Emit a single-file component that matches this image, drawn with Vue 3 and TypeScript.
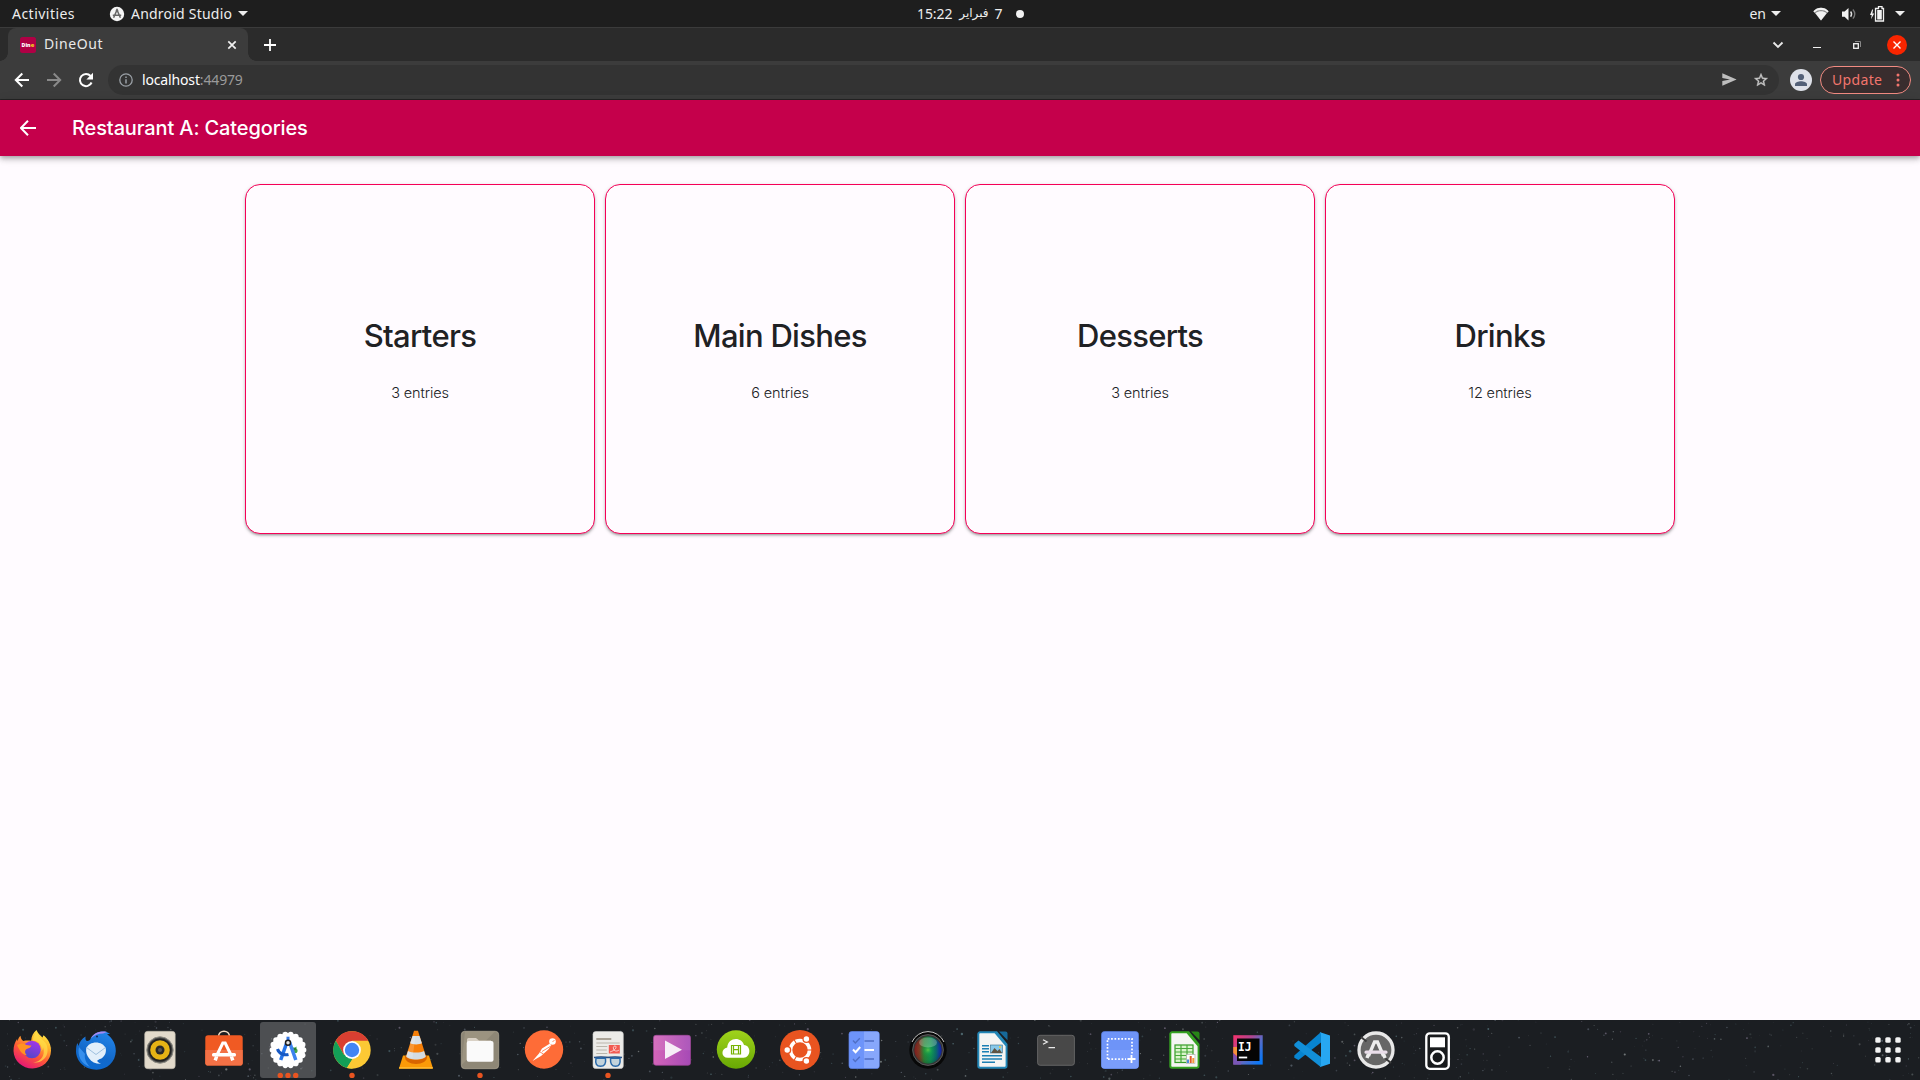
<script setup lang="ts">
interface Category { name: string; entries: number }
interface DockApp { id: string; windows: number; active?: boolean }
interface Star { x: number; y: number; r: number; c: string; o: number }

const categories: Category[] = [
  { name: 'Starters', entries: 3 },
  { name: 'Main Dishes', entries: 6 },
  { name: 'Desserts', entries: 3 },
  { name: 'Drinks', entries: 12 },
]

const apps: DockApp[] = [
  { id: 'firefox', windows: 0 },
  { id: 'thunderbird', windows: 0 },
  { id: 'rhythmbox', windows: 0 },
  { id: 'software', windows: 0 },
  { id: 'android-studio', windows: 3, active: true },
  { id: 'chrome', windows: 1 },
  { id: 'vlc', windows: 0 },
  { id: 'files', windows: 1 },
  { id: 'postman', windows: 0 },
  { id: 'documents', windows: 1 },
  { id: 'videos', windows: 0 },
  { id: 'cloud', windows: 0 },
  { id: 'ubuntu', windows: 0 },
  { id: 'todo', windows: 0 },
  { id: 'camera', windows: 0 },
  { id: 'writer', windows: 0 },
  { id: 'terminal', windows: 0 },
  { id: 'screenshot', windows: 0 },
  { id: 'calc', windows: 0 },
  { id: 'intellij', windows: 0 },
  { id: 'vscode', windows: 0 },
  { id: 'updater', windows: 0 },
  { id: 'ipod', windows: 0 },
]

/* Night-sky speckles behind the dock, from a fixed seed */
let seed = 4271
const rand = (): number => {
  seed = (seed * 16807) % 2147483647
  return seed / 2147483647
}
const tints = ['#7f8a8c', '#8b7f99', '#5f8088', '#9aa0a0', '#6a7480']
const stars: Star[] = Array.from({ length: 700 }, () => ({
  x: rand() * 1920,
  y: rand() * 60,
  r: 0.4 + rand() * rand() * 0.9,
  c: tints[Math.floor(rand() * tints.length)],
  o: 0.15 + rand() * 0.55,
}))

const gridDots = [20, 30, 39.7].flatMap((y) => [22, 32, 42].map((x) => ({ x, y })))
const scallops = Array.from({ length: 18 }, (_, i) => {
  const a = (i * Math.PI) / 9
  return { x: 32 + 15.6 * Math.cos(a), y: 30 + 15.6 * Math.sin(a) }
})
</script>

<template>
  <div class="screen">
    <header class="panel">
      <span class="activities">Activities</span>
      <svg class="app-mark" viewBox="0 0 16 16">
        <circle cx="8" cy="8" r="7.2" fill="#f4f4f4" />
        <path d="M4.6 11.8 8 4l3.4 7.8M3.8 9.2h8.4" fill="none" stroke="#666" stroke-width="1.5" />
        <circle cx="8" cy="4.4" r="1.2" fill="#666" />
      </svg>
      <span class="app-name">Android Studio</span>
      <i class="caret caret-app"></i>
      <div class="clock">
        <span class="time">15:22</span>
        <span class="month" dir="rtl">فبراير</span>
        <span class="day">7</span>
        <i class="notice"></i>
      </div>
      <div class="status">
        <span class="lang">en</span>
        <i class="caret caret-lang"></i>
        <svg class="wifi" width="16" height="16" viewBox="0 0 16 16">
          <path d="M.4 5.2C4.6.6 11.4.6 15.6 5.2L8 14.6Z" fill="#8b8b8b" />
          <path d="M.4 5.2C4.6.6 11.4.6 15.6 5.2l-1 1.3C10.900 3.200 5.100 3.200 1.400 6.500Z" fill="#f2f2f2" />
          <path d="M2.400 7.200C5.600 4.600 10.400 4.600 13.600 7.200L8 14.600Z" fill="#f2f2f2" />
        </svg>
        <svg class="volume" width="16" height="16" viewBox="0 0 16 16">
          <path d="M1 5.500h2.600L7.500 2v12.500L3.600 10.700H1Z" fill="#f2f2f2" />
          <path d="M9.600 5.500q2 2.600 0 5.200" fill="none" stroke="#e2e2e2" stroke-width="1.400" />
          <path d="M11.900 3.500q3.800 4.600 0 9.200" fill="none" stroke="#777" stroke-width="1.300" />
        </svg>
        <svg class="battery" width="16" height="16" viewBox="0 0 16 16">
          <path d="M3.200 3.600 1 9h1.700L2 13.200 5.200 7.400H3.400l.7-3.800Z" fill="#f2f2f2" />
          <path d="M9.500.500h3.500v2h1.500v12.500h-8V2.500h3Z" fill="none" stroke="#f2f2f2" stroke-width="1.300" />
          <rect x="8.200" y="4" width="4.600" height="9.500" fill="#f2f2f2" />
        </svg>
        <i class="caret"></i>
      </div>
    </header>

    <div class="tabstrip">
      <div class="tab">
        <svg class="favicon" width="16" height="16" viewBox="0 0 16 16">
          <rect width="16" height="16" rx="2.500" fill="#b00045" />
          <text x="1.600" y="9.900" textLength="9" lengthAdjust="spacingAndGlyphs" font-family="Open Sans, sans-serif" font-size="5.800" font-weight="800" fill="#fff">Din</text>
          <text x="10.700" y="9.900" font-family="Open Sans, sans-serif" font-size="5.800" font-weight="800" fill="#f3d21b">e</text>
        </svg>
        <span class="tab-title">DineOut</span>
        <svg class="tab-close" width="10" height="10" viewBox="0 0 10 10"><path d="m1.300 1.300 7.400 7.400m0-7.400L1.300 8.700" stroke="#f0f0f0" stroke-width="1.700" /></svg>
      </div>
      <svg class="new-tab" width="12" height="12" viewBox="0 0 12 12"><path d="M6 0v12M0 6h12" stroke="#fff" stroke-width="1.800" /></svg>
      <div class="window-controls">
        <svg width="12" height="8" viewBox="0 0 12 8"><path d="m1.500 1.500 4.500 4.500 4.500-4.500" fill="none" stroke="#e8e8e8" stroke-width="1.900" /></svg>
        <svg width="8" height="8" viewBox="0 0 8 8"><path d="M0 6.500h8" stroke="#f0f0f0" /></svg>
        <svg width="8" height="8" viewBox="0 0 8 8"><path d="M2 .500h5.500V6" fill="none" stroke="#888" /><rect x=".7" y="2.700" width="4.600" height="4.600" fill="none" stroke="#f4f4f4" stroke-width="1.300" /></svg>
        <span class="close"><svg width="8" height="8" viewBox="0 0 8 8"><path d="m.5.500 7 7m0-7-7 7" stroke="#fff" stroke-width="1.400" /></svg></span>
      </div>
    </div>

    <div class="toolbar">
      <svg class="nav" viewBox="0 0 16 16"><path d="M15 8H2M8.300 1.500 1.800 8l6.500 6.500" fill="none" stroke="#fff" stroke-width="2" /></svg>
      <svg class="nav" viewBox="0 0 16 16"><path d="M1 8h13M7.700 1.500 14.200 8l-6.500 6.500" fill="none" stroke="#8a8a8a" stroke-width="2" /></svg>
      <svg class="nav" viewBox="0 0 16 16"><path d="M13.600 10.500A6.100 6.100 0 1 1 12.600 4" fill="none" stroke="#fff" stroke-width="2" /><path d="M15 .800v6.600H8.400Z" fill="#fff" /></svg>
      <div class="omnibox">
        <svg width="14" height="14" viewBox="0 0 14 14"><circle cx="7" cy="7" r="6.200" fill="none" stroke="#9aa0a6" stroke-width="1.300" /><path d="M7 6.200v4.300M7 3.400v1.500" stroke="#9aa0a6" stroke-width="1.500" /></svg>
        <span class="url"><b>localhost</b><span>:44979</span></span>
        <svg class="send" width="15" height="13" viewBox="0 0 15 13"><path d="M.300.300 14.600 6.500.300 12.700V7.900L8 6.500.300 5.100Z" fill="#bdbdbd" /></svg>
        <svg class="star" width="16" height="16" viewBox="0 0 24 24"><path d="M22 9.240l-7.190-.62L12 2 9.190 8.630 2 9.240l5.460 4.730L5.820 21 12 17.270 18.180 21l-1.630-7.030L22 9.240zM12 15.400l-3.760 2.270 1-4.280-3.320-2.880 4.380-.38L12 6.100l1.710 4.040 4.380.38-3.320 2.880 1 4.280L12 15.400z" fill="#c8c8c8" stroke="#c8c8c8" stroke-width=".6" /></svg>
      </div>
      <svg class="avatar" width="22" height="22" viewBox="0 0 22 22"><circle cx="11" cy="11" r="11" fill="#dee1e9" /><circle cx="11" cy="8" r="3.100" fill="#536078" /><path d="M5 17v-1.700c0-2 3.500-3 6-3s6 1 6 3V17Z" fill="#536078" /></svg>
      <div class="update"><span>Update</span><svg width="4" height="14" viewBox="0 0 4 14"><circle cx="2" cy="2" r="1.500" /><circle cx="2" cy="7" r="1.500" /><circle cx="2" cy="12" r="1.500" /></svg></div>
    </div>

    <div class="appbar">
      <svg width="16" height="16" viewBox="0 0 16 16"><path d="M16 8H2M8 .700.900 8 8 15.300" fill="none" stroke="#fff" stroke-width="2" /></svg>
      <h1>Restaurant A: Categories</h1>
    </div>

    <main>
      <section v-for="c in categories" :key="c.name" class="card">
        <h2>{{ c.name }}</h2>
        <p>{{ c.entries }} entries</p>
      </section>
    </main>

    <footer class="dock">
      <svg class="sky" width="1920" height="60">
        <circle v-for="(s, i) in stars" :key="i" :cx="s.x" :cy="s.y" :r="s.r" :fill="s.c" :opacity="s.o" />
      </svg>
      <svg v-for="app in apps" :key="app.id" class="icon" viewBox="0 0 64 60">
        <rect v-if="app.active" x="4" y="2" width="56" height="56" rx="3" fill="#fff" fill-opacity=".22" />

        <g v-if="app.id === 'firefox'">
          <defs>
            <linearGradient id="ff-a" x1=".8" y1="0" x2=".25" y2="1"><stop offset="0" stop-color="#fff44f" /><stop offset=".3" stop-color="#ffb52a" /><stop offset=".6" stop-color="#ff5a36" /><stop offset="1" stop-color="#e3107c" /></linearGradient>
            <linearGradient id="ff-b" x1=".7" y1="0" x2=".3" y2="1"><stop offset="0" stop-color="#a435e8" /><stop offset="1" stop-color="#5148c8" /></linearGradient>
          </defs>
          <path d="M36.500 10c1 3 3.500 5 6 7.500l1-2.200c5 4 7.600 9.500 7.500 15.500C50.800 41 42.500 48.500 32.500 48.500S13.800 41 13.500 31c-.1-5 1.500-9 3.500-12l.8 2.300c.2-2.800 1.400-4.300 2.700-5.500.3 2.700 1.200 4.200 2.700 5.200 3-.6 5.500-.5 8-.2.3-4.500 1.800-8 5.300-10.800Z" fill="url(#ff-a)" />
          <circle cx="32" cy="29.500" r="8.700" fill="url(#ff-b)" />
          <path d="M17 25c3-2 6-2 8-.8 2.500 1.400 4.500 1.300 6.500 1.300-1 2.500-3.500 2.800-4.800 3.600-2.300 1.500-2 4.400.3 6.100-5-.2-7.500-5-10-10.200Z" fill="#ff9222" />
          <path d="M33 20.500c5 .2 9.500 4 8.500 11 1.500-2 1.500-4.500 1.500-4.500 3 9-3 15-10 15.500 12 1 17-9 13.500-18-2-4-8-7-10-12-2.500 2.500-3.500 5-3.500 8Z" fill="#ffe04a" opacity=".7" />
        </g>

        <g v-else-if="app.id === 'thunderbird'">
          <defs><linearGradient id="tb" x1=".7" y1="0" x2=".3" y2="1"><stop offset="0" stop-color="#2384e8" /><stop offset=".6" stop-color="#1268c9" /><stop offset="1" stop-color="#0c6bd2" /></linearGradient></defs>
          <path d="M26 20c2-6 9-9.500 16-8.300l4 2-3 .6c5.500 4 9 9.500 8.800 17C51.500 42 43 49.700 32.500 49.700 21 49.700 12 41.500 12 31c0-4 .5-6 1.500-8l1 3c1-4 3.500-7.500 7-9.500-.5 4 1 6 4.500 3.500Z" fill="url(#tb)" />
          <path d="M27 18.500C29.500 13 36 10.500 43 12l-4 1.500c-5 0-8.500 1.500-12 5Z" fill="#a38af4" />
          <path d="M15 27c-2 8 2 17 11 20-4-4-6-9-5-13Z" fill="#4ca5ff" opacity=".65" />
          <path d="M22.200 28.500c3-8 16.600-8 19.600 0 .8 5-1.800 9-5.800 10.600-2 1-3.500 1.200-2 3 .8.800 1.800 1.400 3 1.700-5 .2-9.500-1.800-12-5.600-2.200-2.600-3.300-6-2.800-9.700Z" fill="#e3effa" />
          <path d="m22.500 27.500 9.500 7 9.500-7" fill="none" stroke="#9fc0de" stroke-width="1" />
          <circle cx="33" cy="16.500" r="1" fill="#122654" />
        </g>

        <g v-else-if="app.id === 'rhythmbox'">
          <rect x="14.700" y="11.300" width="30.500" height="37.400" rx="3" fill="#e2dacb" stroke="#beb7aa" stroke-width=".6" transform="translate(2 0)" />
          <circle cx="32" cy="30" r="13.200" fill="#4b4c4b" stroke="#8e8c84" stroke-width="1" /><circle cx="32" cy="30" r="11.500" fill="#222" /><circle cx="32" cy="30" r="9.800" fill="#e5b315" /><circle cx="32" cy="30" r="4.500" fill="#292929" /><circle cx="32" cy="30" r="2" fill="#555" />
        </g>

        <g v-else-if="app.id === 'software'">
          <path d="M26.500 18.500v-1.800c0-7.300 11-7.300 11 0v1.800" fill="none" stroke="#f5dfc7" stroke-width="1.500" />
          <rect x="13.300" y="15.300" width="37.400" height="30.300" rx="2.800" fill="#f05a23" /><path d="M13.300 30h37.400v13a2.800 2.800 0 0 1-2.800 2.600H16.100a2.800 2.800 0 0 1-2.800-2.600Z" fill="#f37146" />
          <path d="m24.500 36 6.300-13h2.400l6.300 13" fill="none" stroke="#fff" stroke-width="3" /><rect x="20" y="33" width="24" height="3.600" rx="1.500" fill="#fff" /><path d="m24.600 36.500-1.400 3.800m16.200-3.800 1.400 3.800" stroke="#fff" stroke-width="3.500" />
        </g>

        <g v-else-if="app.id === 'android-studio'">
          <circle v-for="(s, i) in scallops" :key="i" :cx="s.x" :cy="s.y" r="2.800" fill="#fff" /><circle cx="32" cy="30" r="16.800" fill="#fff" />
          <path d="M35 27.500h4l1.500-1v2c1.500 1 1.500 3.300 0 4.500H37Z" fill="#42a548" /><circle cx="39" cy="29" r=".8" fill="#194b20" />
          <path d="m31 22-6.300 18" stroke="#2775e8" stroke-width="3.500" /><path d="m33.500 22 6.300 18" stroke="#3c82ef" stroke-width="3.500" /><path d="M21.500 29c1.500 5 7 6.500 11 5.500" fill="none" stroke="#1759c4" stroke-width="3" /><path d="M30.500 16.700h3v4h-3Z" fill="#3679e4" /><circle cx="32" cy="22.800" r="2.500" fill="#e4e4e4" stroke="#1e1e1e" stroke-width="1.500" />
        </g>

        <g v-else-if="app.id === 'chrome'">
          <circle cx="32" cy="30" r="18.700" fill="#fcc934" /><path d="M15.800 20.650A18.700 18.700 0 0 1 48.200 20.650H32L23.900 34.700Z" fill="#d93f31" /><path d="M15.800 20.650 23.900 34.700 32 39.350 32 48.700A18.700 18.700 0 0 1 15.800 20.650Z" fill="#139f57" /><path d="M40.100 34.700 32 48.700 26.500 47.900 34 36Z" fill="#fcc934" /><path d="m26.500 47.900 7.500-12-6-1.500L23.900 34.700Z" fill="#139f57" />
          <circle cx="32" cy="30" r="8.900" fill="#fff" /><circle cx="32" cy="30" r="7.200" fill="#4285f4" />
        </g>

        <g v-else-if="app.id === 'vlc'">
          <path d="M19 35.500h26L49 48.500H15Z" fill="#fb9a08" /><path d="M15.300 47h33.400v1.700H15Z" fill="#ffb72c" /><path d="M21 36c-1.500 10.500 23.500 10.500 22 0Z" fill="#d96500" />
          <path d="M30 10.800h4l8 25.700c-2.500 4.500-17.500 4.500-20 0Z" fill="#f77f08" /><path d="M28.500 16h7l2.400 7.300c-2.500 1.500-9 1.500-11.800 0Z" fill="#d8dfe5" /><path d="M24 31c4 2 12 2 16 0l1.800 5.500c-2.500 4-17 4-19.600 0Z" fill="#d3dbe1" /><path d="M29 16h2.500l-3 22q-4-.5-6-2.200Z" fill="#fff" opacity=".18" />
        </g>

        <g v-else-if="app.id === 'files'">
          <rect x="13.300" y="11.300" width="37.400" height="37.400" rx="3.500" fill="#8e8776" stroke="#aaa28f" stroke-width=".8" /><path d="M13.500 45 47 11.500H17Z" fill="#aaa28f" opacity=".45" /><path d="M19 31V19.500q0-1.500 1.500-1.500h7.500l3 2.500h12v10Z" fill="#d9d1c5" /><rect x="18.700" y="21" width="26.800" height="20.700" rx="2" fill="#fafafa" />
        </g>

        <g v-else-if="app.id === 'postman'">
          <circle cx="32" cy="29.500" r="19.200" fill="#fe6c37" /><circle cx="40.500" cy="21.500" r="3.300" fill="#fff" /><path d="m38 23.500-8 5-3 5-6.500 7.500 8.500-5 7.300-6.500 3-4Z" fill="#fff" /><path d="m39 26-9 5.500m10.500-9.500 2-2M28 32l3.500 2" stroke="#fe6c37" stroke-width=".8" />
        </g>

        <g v-else-if="app.id === 'documents'">
          <rect x="17" y="11.500" width="30.300" height="37" rx="2.800" fill="#ecebe8" stroke="#cfcfcf" stroke-width=".6" /><path d="M20.300 19h15" stroke="#948b7d" stroke-width="1.500" /><path d="M20.300 23h23.400m-23.400 3.500h11M20.300 30h10.500m-10.500 3.500h11M20.300 37h23.400" stroke="#bab6ac" stroke-width="1.200" />
          <rect x="32.800" y="25" width="11" height="8.500" fill="#f25b52" /><path d="M34 32c4-1.500 6-3 6-5s-3.500-1-2.500 2 4.500 2 5.500 1" fill="none" stroke="#fff" stroke-width=".7" />
          <path d="M18 37.600q7-1.200 14 0 7-1.200 14 0" fill="none" stroke="#244c83" stroke-width="1.500" /><path d="M20 38.300h9.500q1 8-5 8T20 38.300Zm14.500 0H44q1 8-4.500 8t-5-8Z" fill="#c3d3dc" stroke="#2969aa" stroke-width="1.500" />
        </g>

        <g v-else-if="app.id === 'videos'">
          <defs><linearGradient id="video" x1="0" x2="1"><stop offset="0" stop-color="#d465b9" /><stop offset="1" stop-color="#a64ab6" /></linearGradient></defs><rect x="13.500" y="15.300" width="37" height="30" rx="2.500" fill="url(#video)" stroke="#9d4297" stroke-width=".7" /><path d="M13.500 15.300h37v15h-37Z" fill="#fff" opacity=".08" /><path d="m25 20.500 17 9.200-17 9.300Z" fill="#f7eef7" />
        </g>

        <g v-else-if="app.id === 'cloud'">
          <defs><linearGradient id="cloud" x2="0" y2="1"><stop offset="0" stop-color="#a0d31b" /><stop offset="1" stop-color="#68a804" /></linearGradient></defs><circle cx="32" cy="29.500" r="19.200" fill="url(#cloud)" /><path d="M24 37.700c-7.500 0-7-9.500-.8-10.300C24 16.500 38 16.500 40 25c7.500.500 7 12.700-.5 12.700Z" fill="#fff" /><path d="M27.500 25.500h9v8.500h-9Zm2 4.200h5M29.500 25.500v8.500m5-8.500v8.500" fill="none" stroke="#78b405" stroke-width="1.200" />
        </g>

        <g v-else-if="app.id === 'ubuntu'">
          <circle cx="32" cy="30" r="20" fill="#e95420" /><circle cx="32" cy="30" r="9.500" fill="none" stroke="#fff" stroke-width="3.600" /><circle cx="19.300" cy="30" r="4" fill="#e95420" /><circle cx="38.400" cy="19" r="4" fill="#e95420" /><circle cx="38.400" cy="41" r="4" fill="#e95420" /><path d="M38 30h6M29 24.800l-3-5.200m3 15.600-3 5.200" stroke="#e95420" stroke-width="1.100" /><circle cx="19.200" cy="30" r="2.700" fill="#fff" /><circle cx="38.400" cy="19" r="2.700" fill="#fff" /><circle cx="38.400" cy="41" r="2.700" fill="#fff" />
        </g>

        <g v-else-if="app.id === 'todo'">
          <rect x="17" y="11.500" width="30.300" height="37" rx="2.800" fill="#6d94fa" stroke="#5e82e5" stroke-width=".7" /><path d="M32 11.800h13a2 2 0 0 1 2 2V46a2 2 0 0 1-2 2H32Z" fill="#87a7fc" /><path d="m21 20.500 2.300 2.500 4.500-4.800m-6.800 20.800 2.300 2.500 4.500-4.800M32.500 21H42m-9.500 18H42" fill="none" stroke="#506fc5" stroke-width="1.400" /><path d="m21 29.500 2.600 2.700 4.600-5.200m4.300 3H42" fill="none" stroke="#fff" stroke-width="2" />
        </g>

        <g v-else-if="app.id === 'camera'">
          <defs><linearGradient id="lens" x2="1"><stop offset="0" stop-color="#b01c1c" /><stop offset=".18" stop-color="#8e3a22" /><stop offset=".36" stop-color="#2d8a35" /><stop offset=".6" stop-color="#0f9a55" /><stop offset=".8" stop-color="#0b6f74" /><stop offset="1" stop-color="#1a1ee0" /></linearGradient><radialGradient id="lens-glow"><stop offset="0" stop-color="#6ad34e" stop-opacity=".75" /><stop offset=".3" stop-color="#14a048" stop-opacity=".3" /><stop offset=".7" stop-color="#0a3a30" stop-opacity=".15" /><stop offset="1" stop-color="#061c1c" stop-opacity=".3" /></radialGradient></defs><circle cx="32" cy="30" r="18.700" fill="#080808" /><path d="M16 22a17.500 17.500 0 0 1 32 0" fill="none" stroke="#c9c9c9" stroke-width="1" /><circle cx="32" cy="30" r="15.400" fill="#343434" stroke="#666" stroke-width=".8" /><circle cx="32" cy="30" r="13.500" fill="url(#lens)" /><circle cx="32" cy="30" r="13.500" fill="url(#lens-glow)" /><ellipse cx="32" cy="22.500" rx="9" ry="5" fill="#fff" opacity=".25" />
        </g>

        <g v-else-if="app.id === 'writer' || app.id === 'calc'">
          <path d="M20.500 11.300H37L47.500 24v22a2.700 2.700 0 0 1-2.700 2.700H20a2.700 2.700 0 0 1-2.700-2.700V14a2.700 2.700 0 0 1 3.200-2.700Z" :fill="app.id === 'writer' ? '#2387b7' : '#35a221'" /><path d="M39 11.500h6.500q2 0 2 2v6.800Z" :fill="app.id === 'writer' ? '#16699a' : '#278517'" /><path d="M19.300 14q0-.8.800-.8h14.500l11 13V46q0 .8-.8.800H20.100q-.8 0-.8-.8Z" fill="#f5f5f3" />
          <template v-if="app.id === 'writer'"><path d="M22 25.700h7M22 28.700h7M22 31.700h7M22 35.700h20M22 39h20M22 42.300h13" stroke="#1d80b4" stroke-width="1.500" /><rect x="30.500" y="25" width="11.800" height="8" fill="#88c9ea" stroke="#316b8b" stroke-width=".6" /><path d="m31 33 3.500-5 3 3 2-2 2.500 4Z" fill="#5f5544" /><circle cx="40" cy="27" r="1" fill="#f6ca35" /></template>
          <template v-else><rect x="23" y="25" width="18" height="17.500" fill="#d9f5cb" stroke="#369d27" stroke-width="1.200" /><path d="M23 28.500h18M23 32h18m-18 3.500h18M23 39h18M29 25v17.500m6-17.500v17.500" stroke="#48a93a" stroke-width="1.200" /><rect x="34.500" y="34.500" width="8.500" height="9" fill="#fff" stroke="#aaa" stroke-width=".6" /><path d="M36 39.500V43" stroke="#498edc" stroke-width="2" /><path d="M38.700 36v7" stroke="#e15a2a" stroke-width="2" /><path d="M41.300 38v5" stroke="#f29c38" stroke-width="2" /></template>
        </g>

        <g v-else-if="app.id === 'terminal'">
          <rect x="13.600" y="15.300" width="36.800" height="30" rx="2.500" fill="#484848" stroke="#696969" stroke-width=".9" /><path d="m19 19.700 4.300 2.300L19 24.300M24.500 27.700H31" fill="none" stroke="#e9e9e9" stroke-width="1.300" />
        </g>

        <g v-else-if="app.id === 'screenshot'">
          <rect x="13.500" y="11.500" width="37" height="37" rx="3" fill="#6e94f8" stroke="#587de2" stroke-width=".7" /><path d="M13.500 30h37v16q0 2.500-3 2.500h-31q-3 0-3-2.500Z" fill="#7a9dfb" /><path d="M19.500 39V18.800H44V34M20 39.200h18" fill="none" stroke="#fff" stroke-width="1.700" stroke-dasharray="1.700 1.700" /><path d="M43.500 35v8M39.500 39h8" stroke="#fff" stroke-width="1.800" />
        </g>

        <g v-else-if="app.id === 'intellij'">
          <defs><linearGradient id="ij" y1="0" x2="1" y2=".8"><stop offset="0" stop-color="#f9316b" /><stop offset=".4" stop-color="#b14590" /><stop offset=".65" stop-color="#596bc6" /><stop offset="1" stop-color="#0878f8" /></linearGradient></defs><rect x="17.300" y="15.200" width="29.400" height="29.400" fill="url(#ij)" /><path d="M17.300 27h5v10l-5-4Z" fill="#f69339" /><path d="m17.300 33 8 11.600h-8Z" fill="#7956b6" /><rect x="21" y="18.500" width="22.500" height="22.500" fill="#050505" /><text x="22" y="31.300" font-family="DejaVu Sans Mono, monospace" font-weight="700" font-size="13" textLength="13.500" lengthAdjust="spacingAndGlyphs" fill="#fff">IJ</text><path d="M22.800 37.500h8.400" stroke="#fff" stroke-width="1.800" />
        </g>

        <g v-else-if="app.id === 'vscode'">
          <path d="M41 12v10.500L18.500 40 14.300 37.800v-2.300Z" fill="#0784d0" /><path d="m14.300 24 4.200-3.500L41 37v10.300L14.300 26Z" fill="#128fd8" /><path d="M39.500 12 50 15.500v28.300l-10.500 3.500q1.500-.5 1.500-2.500v-30q0-2-1.500-2.800Z" fill="#27a7f2" />
        </g>

        <g v-else-if="app.id === 'updater'">
          <circle cx="32" cy="30" r="17" fill="#666" stroke="#e8e8e8" stroke-width="3.300" /><path d="m17 17 5.500 4.500M47 43l-5.500-4.500" stroke="#3c3c3c" stroke-width="2" /><path d="m24.500 36 6-14h3l6 14" fill="none" stroke="#eee" stroke-width="3.300" /><rect x="20.500" y="30.500" width="23" height="3.300" rx="1.500" fill="#eadeea" /><path d="m24.500 34-1.500 4m16.500-4 1.500 4" stroke="#eee" stroke-width="3.500" />
        </g>

        <g v-else>
          <rect x="18.300" y="13.300" width="22.500" height="35.500" rx="3.500" fill="#181a1c" stroke="#fff" stroke-width="2.300" /><rect x="22" y="17.300" width="15" height="10" fill="#fff" /><circle cx="29.500" cy="37.500" r="6.200" fill="none" stroke="#fff" stroke-width="2.500" />
        </g>

        <circle v-for="n in app.windows" :key="n" :cx="32 + (n - (app.windows + 1) / 2) * 7.700" cy="55.400" r="2.700" fill="#e95420" />
      </svg>
      <svg class="icon launcher" viewBox="0 0 64 60"><rect v-for="(d, i) in gridDots" :key="i" :x="d.x - 2.700" :y="d.y - 2.700" width="5.400" height="5.400" rx="1.500" fill="#f3f3f3" /></svg>
    </footer>
  </div>
</template>

<style>
body { margin: 0; }
</style>

<style scoped>
.screen { width: 1920px; height: 1080px; display: flex; flex-direction: column; overflow: hidden; background: #fffbff; font-family: "Noto Sans", "Open Sans", sans-serif; }
.screen * { box-sizing: border-box; }
svg { display: block; flex: none; }
.panel { height: 27px; flex: none; display: grid; grid-template-columns: 12px 97px 22px 107px auto 1fr auto; align-items: center; background: #1e1e1e; color: #ededed; font-size: 14px; line-height: 27px; white-space: nowrap; }
.activities { grid-column: 2; letter-spacing: .47px; }
.app-name { letter-spacing: .22px; }
.app-mark { width: 16px; height: 16px; }
.caret { width: 0; height: 0; border: 5px solid transparent; border-top-color: #ededed; border-bottom: 0; }
.clock { display: flex; align-items: center; margin-left: 669px; }
.time { letter-spacing: -.1px; }
.month { margin-left: 7px; font-family: "DejaVu Sans", sans-serif; font-size: 12px; }
.day { margin-left: 6px; }
.notice { width: 8px; height: 8px; border-radius: 50%; background: #f2f2f2; margin-left: 13px; }
.status { display: flex; align-items: center; padding-right: 15px; }
.caret-lang { margin-left: 5px; }
.wifi { margin-left: 32px; }
.volume { margin-left: 12px; }
.battery { margin-left: 12px; margin-right: 10px; }
.tabstrip { height: 34px; flex: none; display: flex; align-items: center; padding-left: 8px; background: #2b2b2b; border-top: 1px solid #3b3b3b; }
.tab { position: relative; width: 240px; height: 33px; display: flex; align-items: center; padding: 0 11px 0 12px; background: #3c3c3c; border-radius: 8px 8px 0 0; color: #e9e9e9; font-size: 14px; line-height: 19px; }
.tab::before, .tab::after { content: ""; position: absolute; bottom: 0; width: 8px; height: 8px; }
.tab::before { left: -8px; background: radial-gradient(circle at 0 0, transparent 7.5px, #3c3c3c 8px); }
.tab::after { right: -8px; background: radial-gradient(circle at 100% 0, transparent 7.5px, #3c3c3c 8px); }
.tab-title { margin-left: 8px; padding-bottom: 2px; letter-spacing: .6px; }
.tab-close { margin-left: auto; }
.new-tab { margin-left: 16px; }
.window-controls { margin-left: auto; display: flex; align-items: center; padding-right: 13px; }
.window-controls > :nth-child(2) { margin-left: 29px; }
.window-controls > :nth-child(3) { margin-left: 32px; }
.close { width: 20px; height: 20px; margin-left: 26px; border-radius: 50%; background: #f92500; display: grid; place-items: center; }
.toolbar { height: 39px; flex: none; display: flex; align-items: center; padding: 0 9px 1px 14px; background: #3c3c3c; border-bottom: 1px solid #252525; }
.nav { width: 16px; height: 16px; margin-right: 16px; }
.omnibox { flex: 1; height: 30px; margin-left: -2px; border-radius: 15px; background: #333; display: flex; align-items: center; padding: 0 10px 0 11px; }
.url { margin-left: 9px; font-size: 14px; letter-spacing: -.15px; color: #9a9a9a; }
.url b { font-weight: 400; color: #fff; }
.send { margin-left: auto; }
.star { margin-left: 16px; }
.avatar { margin-left: 11px; }
.update { width: 91px; height: 28px; margin-left: 8px; border: 1px solid #f28b82; border-radius: 14px; background: #392d2e; color: #f2756d; fill: #f2756d; font-size: 14px; letter-spacing: .35px; display: flex; align-items: center; padding: 0 10px 0 11px; justify-content: space-between; }
.appbar { height: 56px; flex: none; display: flex; align-items: center; padding-left: 20px; background: #c5004b; color: #fff; box-shadow: 0 2px 4px -1px #0003, 0 4px 5px #00000024, 0 1px 10px #0000001f; font-family: Inter, sans-serif; }
h1 { margin: 0 0 0 36px; font-size: 20px; font-weight: 500; line-height: 28px; letter-spacing: -.12px; }
main { flex: 1; display: flex; justify-content: center; align-items: flex-start; gap: 10px; padding-top: 28px; font-family: Inter, sans-serif; }
.card { width: 350px; height: 350px; border: 1px solid #f50057; border-radius: 15px; background: #fffbff; box-shadow: 0 2px 2px -1px #0003, 0 2px 3px #00000024, 0 1px 4px #0000001f; display: flex; flex-direction: column; align-items: center; justify-content: center; color: #202124; }
h2 { margin: 0 0 27px; font-size: 31px; line-height: 40px; font-weight: 500; letter-spacing: -.7px; }
p { margin: 0; font-size: 14.5px; line-height: 20px; font-weight: 300; letter-spacing: -.12px; }
.dock { position: relative; height: 60px; flex: none; display: flex; background: #1b1e22; }
.sky { position: absolute; inset: 0; }
.icon { position: relative; width: 64px; height: 60px; }
.launcher { margin-left: auto; }
</style>
